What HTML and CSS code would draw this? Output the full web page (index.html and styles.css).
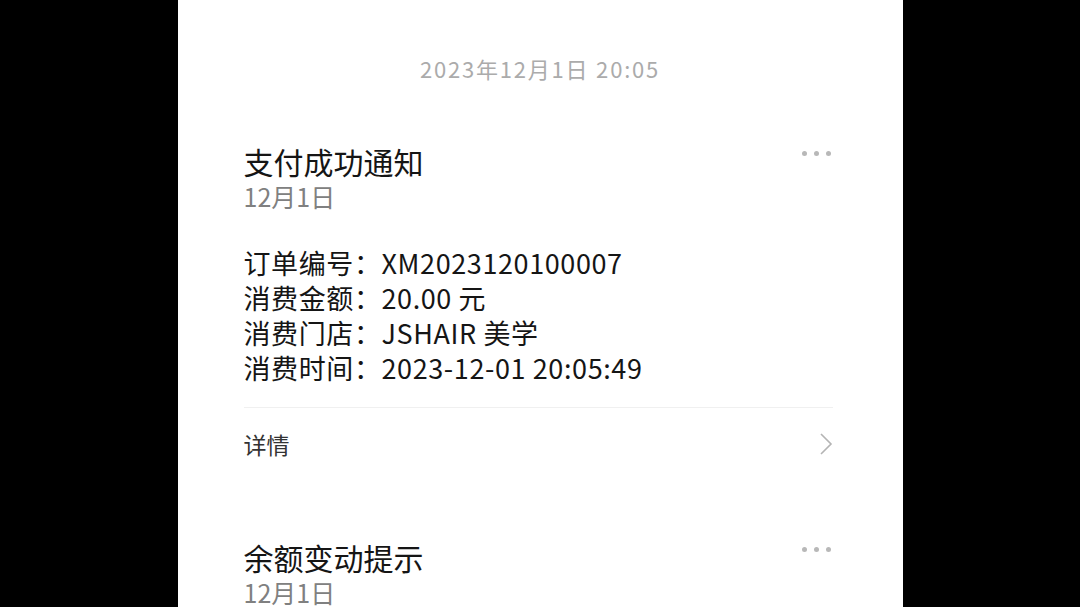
FILE: index.html
```html
<!DOCTYPE html>
<html lang="zh-CN">
<head>
    <meta charset="UTF-8">
    <meta name="viewport" content="width=device-width, initial-scale=1.0">
    <title>服务通知</title>
    <link rel="stylesheet" href="styles.css">
</head>
<body>
    <div class="screen">
        <div class="time">2023年12月1日 20:05</div>

        <div class="card">
            <div class="card-head">
                <div>
                    <div class="card-title">支付成功通知</div>
                    <div class="card-date">12月1日</div>
                </div>
                <div class="more"><span></span><span></span><span></span></div>
            </div>
            <div class="card-body">
                <div class="line"><span class="label">订单编号：</span>XM2023120100007</div>
                <div class="line"><span class="label">消费金额：</span>20.00 元</div>
                <div class="line"><span class="label">消费门店：</span>JSHAIR 美学</div>
                <div class="line"><span class="label">消费时间：</span>2023-12-01 20:05:49</div>
            </div>
            <div class="detail">
                <span>详情</span>
                <svg class="chevron" width="14" height="24" viewBox="0 0 14 24">
                    <polyline points="2,2 12,12 2,22" fill="none" stroke="#b4b4b4" stroke-width="1.6"/>
                </svg>
            </div>
        </div>

        <div class="card second">
            <div class="card-head">
                <div>
                    <div class="card-title">余额变动提示</div>
                    <div class="card-date">12月1日</div>
                </div>
                <div class="more"><span></span><span></span><span></span></div>
            </div>
        </div>
    </div>
</body>
</html>
```

FILE: styles.css
```css
body {
    margin: 0;
    background: #000;
    font-family: "Noto Sans CJK SC", "Noto Sans", sans-serif;
}
.screen {
    width: 725px;
    height: 607px;
    margin: 0 auto;
    background: #fff;
    overflow: hidden;
}
.time {
    padding-top: 53px;
    text-align: center;
    font-size: 22px;
    line-height: 30px;
    letter-spacing: 1.8px;
    color: #ababab;
}
.card {
    margin-top: 61px;
    padding: 0 70px 0 66px;
}
.card.second {
    margin-top: 60px;
}
.card-head {
    display: flex;
    justify-content: space-between;
    align-items: flex-start;
}
.card-title {
    font-size: 30px;
    line-height: 34px;
    color: #151515;
}
.card-date {
    margin-top: 2px;
    font-size: 25px;
    line-height: 32px;
    color: #808080;
}
.more {
    display: flex;
    gap: 7px;
    margin-top: 7px;
    margin-right: 2px;
}
.more span {
    width: 5px;
    height: 5px;
    border-radius: 50%;
    background: #b8b8b8;
}
.card-body {
    margin-top: 33px;
    padding-bottom: 22px;
    border-bottom: 1px solid #f0f0f0;
}
.line {
    font-size: 27px;
    line-height: 35px;
    letter-spacing: 0.6px;
    color: #151515;
}
.detail {
    display: flex;
    justify-content: space-between;
    align-items: center;
    height: 72px;
    font-size: 23px;
    color: #333;
}
.chevron {
    display: block;
}
```
